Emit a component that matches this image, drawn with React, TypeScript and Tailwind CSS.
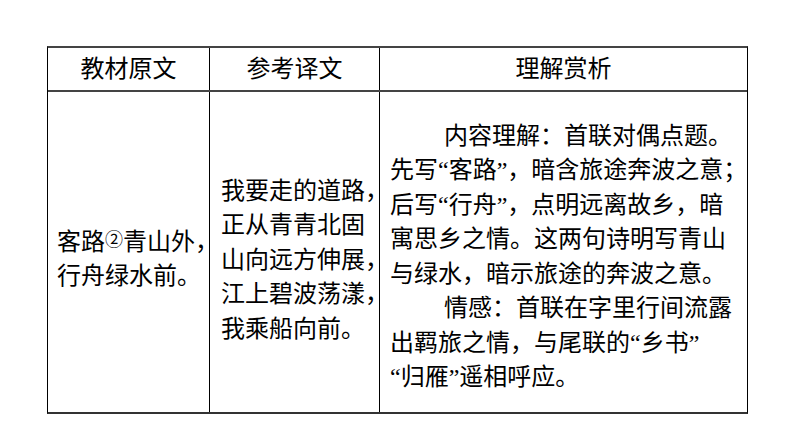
const FONT = "font-['Liberation_Serif','Noto_Sans_CJK_SC',sans-serif]";

const MIDDLE = ["我要走的道路，", "正从青青北固", "山向远方伸展，", "江上碧波荡漾，", "我乘船向前。"];

const RIGHT: { text: string; indent?: boolean }[] = [
  { text: "内容理解：首联对偶点题。", indent: true },
  { text: "先写“客路”，暗含旅途奔波之意；" },
  { text: "后写“行舟”，点明远离故乡，暗" },
  { text: "寓思乡之情。这两句诗明写青山" },
  { text: "与绿水，暗示旅途的奔波之意。" },
  { text: "情感：首联在字里行间流露", indent: true },
  { text: "出羁旅之情，与尾联的“乡书”" },
  { text: "“归雁”遥相呼应。" },
];

export default function App() {
  return (
    <div className={`min-h-[447px] w-[794px] bg-white pl-[47px] pt-[46px] text-black ${FONT}`}>
      <div className="w-[701px] border-x border-b-2 border-t-2 border-x-black border-b-[#333] border-t-[#444]">
        {/* header */}
        <div className="grid grid-cols-[162px_170px_367px] border-b-2 border-[#444] text-[24px]">
          <div className="flex h-[42px] items-center justify-center border-r border-black">教材原文</div>
          <div className="flex h-[42px] items-center justify-center border-r border-black">参考译文</div>
          <div className="flex h-[42px] items-center justify-center">理解赏析</div>
        </div>

        {/* body */}
        <div className="grid h-[320px] grid-cols-[162px_170px_367px] text-[24px] leading-[34.5px]">
          <div className="flex flex-col justify-center border-r border-black pl-[9px] pt-[14px]">
            <div className="whitespace-nowrap">
              客路<span className="align-[4px] text-[18px] leading-none">②</span>青山外，
            </div>
            <div className="whitespace-nowrap">行舟绿水前。</div>
          </div>

          <div className="flex flex-col justify-center border-r border-black pl-[11px] pt-[16px]">
            {MIDDLE.map((line) => (
              <div key={line} className="whitespace-nowrap">
                {line}
              </div>
            ))}
          </div>

          <div className="flex flex-col justify-center pl-[10px] pt-[9px]">
            {RIGHT.map((line) => (
              <div key={line.text} className={`whitespace-nowrap ${line.indent ? "pl-[54px]" : ""}`}>
                {line.text}
              </div>
            ))}
          </div>
        </div>
      </div>
    </div>
  );
}
